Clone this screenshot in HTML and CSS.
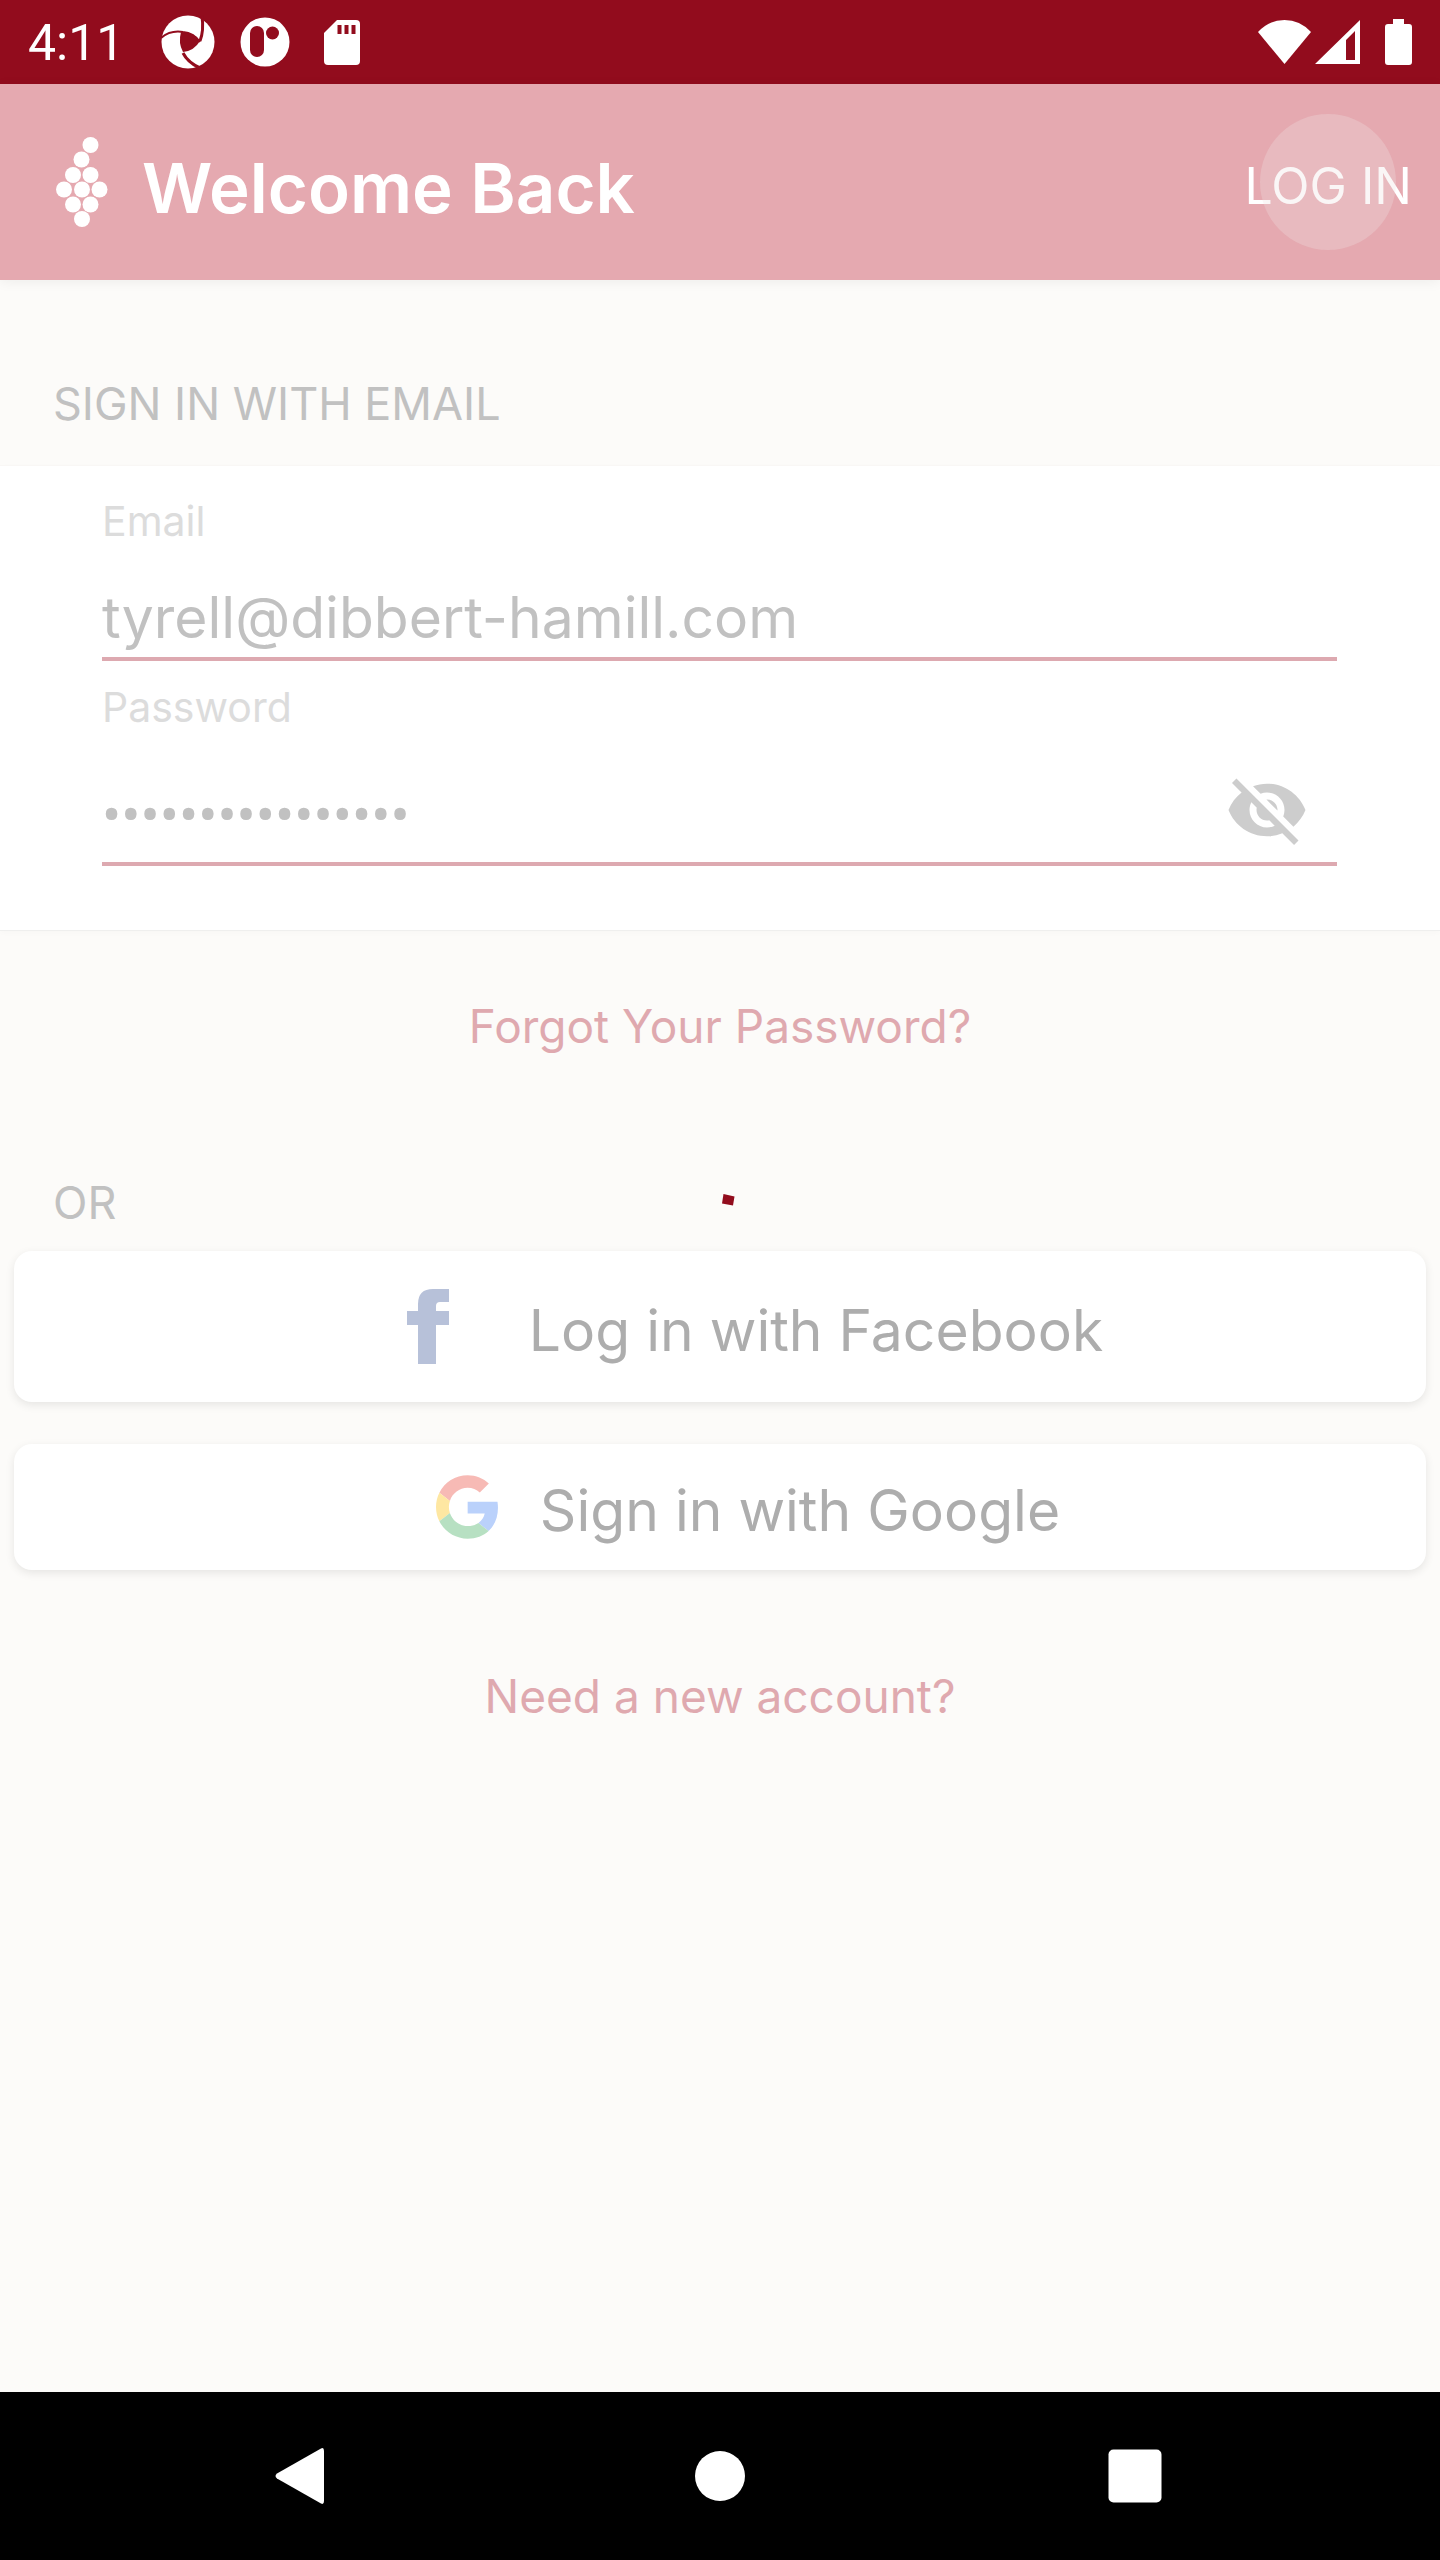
FILE: index.html
```html
<!DOCTYPE html>
<html lang="en">
<head>
<meta charset="utf-8">
<meta name="viewport" content="width=device-width, initial-scale=1">
<title>Welcome Back</title>
<link rel="stylesheet" href="styles.css">
</head>
<body>
<div class="status-bar">
  <span class="clock">4:11</span>
  <svg class="status-icon" width="54" height="54" viewBox="0 0 54 54" aria-hidden="true">
    <circle cx="27" cy="27" r="26.5" fill="#fff"/>
    <path d="M20 17Q33 17 39 26Q33 36 22 37Q17 28 20 17Z" fill="#920c1d"/>
    <path d="M0 23Q9 15 22 17Q33 18 39 27" fill="none" stroke="#920c1d" stroke-width="2"/>
    <path d="M41 1Q43 16 39 26" fill="none" stroke="#920c1d" stroke-width="3"/>
    <path d="M22 38Q27 48 41 54" fill="none" stroke="#920c1d" stroke-width="3"/>
  </svg>
  <svg class="status-icon" width="50" height="50" viewBox="0 0 50 50" aria-hidden="true">
    <circle cx="25" cy="25" r="24.5" fill="#fff"/>
    <rect x="10" y="9" width="14" height="31" rx="7" fill="#920c1d"/>
    <circle cx="32.500" cy="16" r="6.500" fill="#920c1d"/>
  </svg>
  <svg class="status-icon card" width="36" height="45" viewBox="0 0 36 45" aria-hidden="true">
    <path d="M13 0H32Q36 0 36 4V41Q36 45 32 45H4Q0 45 0 41V13Z" fill="#fff"/>
    <path d="M13.500 5h4v9h-4zM20.500 5h4v9h-4zM27.500 5h4v9h-4z" fill="#920c1d"/>
  </svg>
  <span class="status-gap"></span>
  <svg class="wifi" width="53" height="44" viewBox="0 0 53 44" aria-hidden="true">
    <path d="M0 12Q11 0 26.500 0T53 12L26.500 44Z" fill="#fff"/>
  </svg>
  <svg class="signal" width="45" height="44" viewBox="0 0 45 44" aria-hidden="true">
    <path fill-rule="evenodd" d="M0 44L45 0V44ZM31 20V40H40V11Z" fill="#fff"/>
  </svg>
  <svg width="27" height="46" viewBox="0 0 27 46" aria-hidden="true">
    <path d="M8 0H19V5H24Q27 5 27 8V43Q27 46 24 46H3Q0 46 0 43V8Q0 5 3 5H8Z" fill="#fff"/>
  </svg>
</div>

<div class="screen">
  <header class="app-bar">
    <svg class="grapes" width="52" height="90" viewBox="0 0 52 90" fill="#fff" aria-hidden="true">
      <circle cx="34.500" cy="8" r="8"/><circle cx="25.500" cy="22.500" r="8"/>
      <circle cx="17" cy="38" r="8"/><circle cx="34.500" cy="38" r="8"/>
      <circle cx="8" cy="52.500" r="8"/><circle cx="26" cy="52.500" r="8"/><circle cx="43.500" cy="52.500" r="8"/>
      <circle cx="17" cy="67.500" r="8"/><circle cx="34.500" cy="67.500" r="8"/>
      <circle cx="26" cy="82" r="8"/>
    </svg>
    <h1 class="title">Welcome Back</h1>
    <button class="login" type="submit" form="sign-in">LOG IN</button>
  </header>

  <main>
    <h2 class="section-title first">SIGN IN WITH EMAIL</h2>
    <form class="panel" id="sign-in">
      <div class="field">
        <label for="email">Email</label>
        <div class="control">
          <input id="email" type="email" value="tyrell@dibbert-hamill.com">
        </div>
      </div>
      <div class="field">
        <label for="password">Password</label>
        <div class="control with-toggle">
          <input id="password" type="password" value="sixteencharacter">
          <button class="toggle" type="button" aria-label="Show password">
            <svg width="84" height="84" viewBox="0 0 24 24" fill="#cdcdcd" aria-hidden="true">
              <path d="M12 7c2.760 0 5 2.240 5 5 0 .65-.13 1.260-.36 1.830l2.920 2.920c1.510-1.260 2.700-2.890 3.430-4.750-1.730-4.390-6-7.500-11-7.500-1.400 0-2.740.25-3.980.7l2.160 2.160C10.740 7.130 11.350 7 12 7zM2 4.270l2.280 2.280.46.46C3.080 8.300 1.780 10.020 1 12c1.730 4.390 6 7.500 11 7.500 1.550 0 3.030-.3 4.380-.84l.42.42L19.730 22 21 20.730 3.270 3 2 4.270zM7.530 9.800l1.550 1.550c-.05.21-.08.43-.08.65 0 1.660 1.340 3 3 3 .22 0 .44-.03.65-.08l1.550 1.550c-.67.33-1.410.53-2.200.53-2.760 0-5-2.240-5-5 0-.79.2-1.530.53-2.200zm4.310-.78l3.150 3.150.02-.16c0-1.660-1.340-3-3-3l-.17.01z"/>
            </svg>
          </button>
        </div>
      </div>
    </form>

    <a class="link forgot" href="#">Forgot Your Password?</a>

    <h2 class="section-title">OR</h2>
    <div class="providers">
      <button class="provider facebook" type="button">
        <svg width="42" height="75" viewBox="0 0 42 75" fill="#b7c1d9" aria-hidden="true">
          <path d="M11 75V36H0V22H11V15Q11 0 26 0H42V13H33Q29 13 29 17V22H42V36H29V75Z"/>
        </svg>
        <span>Log in with Facebook</span>
      </button>
      <button class="provider google" type="button">
        <svg width="62" height="64" viewBox="0 0 47 48" aria-hidden="true">
          <path fill="#f7bab5" d="M24 9.500c3.540 0 6.710 1.220 9.210 3.600l6.850-6.850C35.900 2.380 30.470 0 24 0 14.620 0 6.510 5.380 2.560 13.220l7.980 6.190C12.430 13.720 17.740 9.500 24 9.500z"/>
          <path fill="#bad1fb" d="M46.980 24.550c0-1.570-.15-3.090-.38-4.550H24v9.020h12.940c-.58 2.960-2.260 5.480-4.780 7.180l7.730 6c4.510-4.180 7.090-10.360 7.090-17.650z"/>
          <path fill="#fee7a2" d="M10.530 28.590c-.48-1.450-.76-2.990-.76-4.590s.27-3.140.76-4.590l-7.980-6.190C.92 16.460 0 20.120 0 24c0 3.880.92 7.540 2.560 10.780l7.970-6.190z"/>
          <path fill="#b7e0c2" d="M24 48c6.480 0 11.930-2.130 15.890-5.810l-7.730-6c-2.150 1.450-4.920 2.300-8.160 2.300-6.260 0-11.570-4.220-13.470-9.910l-7.980 6.190C6.510 42.620 14.620 48 24 48z"/>
        </svg>
        <span>Sign in with Google</span>
      </button>
    </div>

    <a class="link signup" href="#">Need a new account?</a>
  </main>

  <svg class="spinner" width="96" height="96" viewBox="0 0 96 96" role="img" aria-label="Loading">
    <path d="M51.500 4L62.500 6.500L61 15.500L50 13.500Z" fill="#920c1d"/>
  </svg>
</div>

<nav class="nav-bar">
  <button class="back" type="button" aria-label="Back">
    <svg width="52" height="58" viewBox="0 0 52 58" fill="#fff"><path d="M47 1.500Q50 0 50 4V54Q50 58 47 56.500L3 31.500Q0 29 3 26.500Z"/></svg>
  </button>
  <button type="button" aria-label="Home">
    <svg width="52" height="52" viewBox="0 0 52 52" fill="#fff"><circle cx="26" cy="26" r="25"/></svg>
  </button>
  <button class="recents" type="button" aria-label="Recent apps">
    <svg width="54" height="54" viewBox="0 0 54 54" fill="#fff"><rect x="0.500" y="0.500" width="53" height="53" rx="5"/></svg>
  </button>
</nav>
</body>
</html>
```
FILE: styles.css
```css
* { box-sizing: border-box; }

body {
  margin: 0;
  min-height: 100vh;
  display: flex;
  flex-direction: column;
  background: #fcfbf9;
  font-family: Inter, "Liberation Sans", sans-serif;
}

button, input { font: inherit; color: inherit; }
button { border: 0; background: none; padding: 0; cursor: pointer; }
svg { display: block; flex: none; }

.status-bar {
  height: 84px;
  padding: 0 28px;
  display: flex;
  align-items: center;
  background: #920c1d;
  color: #fff;
}
.clock {
  font: 400 50px/56px Roboto, sans-serif;
  margin-right: 12px;
  padding-top: 2px;
}
.status-icon { margin-left: 25px; }
.card { margin-left: 34px; }
.status-gap { flex: 1; }
.signal { margin: 0 25px 0 4px; }

.screen {
  flex: 1;
  position: relative;
}

.app-bar {
  height: 196px;
  padding: 0 28px 0 56px;
  display: flex;
  align-items: center;
  background: #e5a9b0;
  box-shadow: 0 2px 12px rgba(0, 0, 0, 0.06);
  color: #fff;
}
.title {
  margin: 0 auto 0 34px;
  padding-top: 12px;
  font-size: 69px;
  line-height: 80px;
  font-weight: 600;
}
.login {
  position: relative;
  height: 136px;
  padding-top: 8px;
  font-size: 50px;
  line-height: 56px;
}
.login::before {
  content: "";
  position: absolute;
  top: 0;
  left: 50%;
  width: 136px;
  height: 136px;
  margin-left: -68px;
  border-radius: 50%;
  background: rgba(240, 226, 226, 0.3);
}

main {
  display: flex;
  flex-direction: column;
}
.section-title {
  margin: 0;
  padding: 0 53px;
  font-size: 45px;
  line-height: 56px;
  font-weight: 400;
  color: #c1c1c1;
}
.first { padding-top: 96px; }

.panel {
  margin-top: 33px;
  padding: 31px 103px 64px 102px;
  display: flex;
  flex-direction: column;
  gap: 22px;
  background: #fff;
  border-top: 1px solid #f9f7f5;
  border-bottom: 1px solid #efefee;
  box-shadow: 0 2px 6px rgba(0, 0, 0, 0.02);
}
.field {
  display: flex;
  flex-direction: column;
}
.field label {
  font-size: 41px;
  line-height: 48px;
  color: #dcdcdc;
}
.control {
  display: flex;
  align-items: center;
  padding-top: 32px;
  border-bottom: 4px solid #dda9b0;
}
.control input {
  flex: 1;
  min-width: 0;
  height: 80px;
  padding: 0;
  border: 0;
  outline: 0;
  background: none;
  font-size: 57px;
  color: #c1c1c1;
}
.control input[type="password"] {
  padding-top: 12px;
  font-family: Roboto, sans-serif;
}
.with-toggle {
  height: 135px;
  padding: 26px 28px 0 0;
}

.link {
  align-self: center;
  font-size: 46px;
  line-height: 56px;
  color: #dfa9af;
  text-decoration: none;
}
.forgot { margin: 67px 0 121px; }
.signup { margin: 98px 0; }

.providers {
  margin-top: 20px;
  padding: 0 14px;
  display: flex;
  flex-direction: column;
  gap: 42px;
}
.provider {
  display: flex;
  align-items: center;
  justify-content: center;
  border-radius: 18px;
  background: #fff;
  box-shadow: 0 3px 10px rgba(0, 0, 0, 0.09);
  font-size: 57px;
  line-height: 64px;
  color: #adadad;
}
.provider span { padding-top: 8px; }
.facebook {
  height: 151px;
  padding-left: 70px;
  gap: 80px;
}
.google {
  height: 126px;
  padding-left: 56px;
  gap: 42px;
}

.spinner {
  position: absolute;
  top: 50%;
  left: 50%;
  margin: -48px 0 0 -48px;
}

.nav-bar {
  height: 168px;
  display: grid;
  grid-template-columns: 1fr auto 1fr;
  background: #000;
}
.nav-bar button {
  display: flex;
  align-items: center;
}
.nav-bar .back {
  justify-content: flex-end;
  padding-right: 368px;
}
.nav-bar .recents { padding-left: 362px; }
```
